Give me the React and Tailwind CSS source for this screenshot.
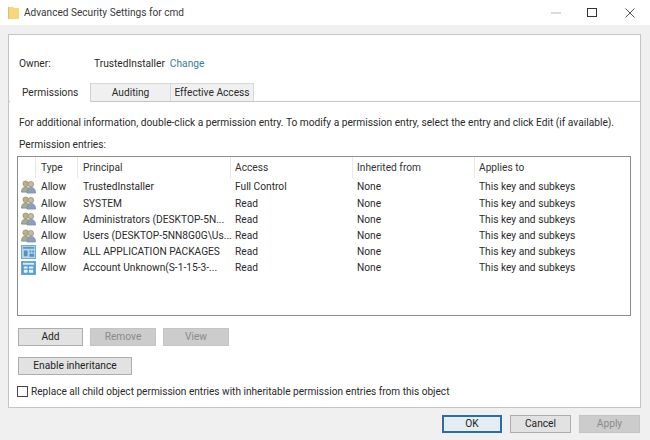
import React from "react";

const rows = [
  ["u", "TrustedInstaller", "Full Control"],
  ["u", "SYSTEM", "Read"],
  ["u", "Administrators (DESKTOP-5N...", "Read"],
  ["u", "Users (DESKTOP-5NN8G0G\\Us...", "Read"],
  ["p", "ALL APPLICATION PACKAGES", "Read"],
  ["q", "Account Unknown(S-1-15-3-...", "Read"],
];

function Users() {
  return (
    <svg width="15" height="14" viewBox="0 0 16 15" className="shrink-0">
      <circle cx="5" cy="4" r="3" fill="#c4ad84" stroke="#8c8576" strokeWidth="0.7" />
      <path d="M0.500 13 C0.500 8.500 2.500 7.500 5 7.500 C7.500 7.500 9.500 8.500 9.500 13 Z" fill="#a3ad91" stroke="#848c78" strokeWidth="0.7" />
      <circle cx="10.500" cy="4.500" r="3" fill="#c9b8a0" stroke="#8a8578" strokeWidth="0.7" />
      <path d="M6.500 14 C6.500 9 8.500 8 10.500 8 C13 8 15.500 9 15.500 14 Z" fill="#8d9fc0" stroke="#76849e" strokeWidth="0.7" />
    </svg>
  );
}

function Pkg({ solid }) {
  return (
    <svg width="15" height="14" viewBox="0 0 16 15" className="shrink-0">
      <rect x="0.500" y="0.500" width="15" height="14" fill={solid ? "#5a9fcc" : "#b4d7ee"} stroke="#6ba5cc" />
      <rect x="2" y="2" width="12" height="2" fill={solid ? "#d9ecf8" : "#5b96c4"} />
      {solid ? (
        <path d="M3 6h4v2H3zM8.500 6h4.500v2H8.500zM3 9.500h4v3H3zM8.500 9.500h4.500v3H8.500z" fill="#e6f2fa" />
      ) : (
        <path d="M3 6h4v6H3zM9 6h2v2H9zM12 6h2v2h-2zM9 9.500h5v3H9z" fill="#5a8fb9" />
      )}
    </svg>
  );
}

function Btn({ children, w, disabled, primary }) {
  return (
    <button
      className={`h-[18px] flex items-center justify-center border leading-none ${w} ${
        disabled
          ? "bg-[#cccccc] border-[#c4c4c4] text-[#8a8a8a]"
          : primary
          ? "bg-[#e3edf3] border-[#2a6f9e] border-2 text-[#222222]"
          : "bg-[#e2e2e2] border-[#adadad] text-[#222222]"
      }`}
    >
      {children}
    </button>
  );
}

export default function App() {
  return (
    <div className="w-[650px] h-[440px] bg-[#f0f0f0] overflow-hidden flex flex-col text-[10.2px] text-[#2a2a2a] font-['Roboto','Open_Sans',sans-serif]">
      {/* Title bar */}
      <div className="h-[25px] bg-white flex items-center shrink-0">
        <svg width="12" height="14" viewBox="0 0 12 14" className="ml-2 mt-[1px]">
          <path d="M0 1h5l1 1h5v11H0z" fill="#f6d77f" />
          <path d="M0 1h1v12H0z" fill="#e5bf5c" />
        </svg>
        <span className="ml-[4px] text-[10.1px] text-[#3a3a3a]">Advanced Security Settings for cmd</span>
        <div className="ml-auto flex items-center">
          <svg width="12" height="12" viewBox="0 0 12 12" className="mr-[25px]">
            <path d="M1 6h10" stroke="#b5b5b5" strokeWidth="1" />
          </svg>
          <svg width="10" height="10" viewBox="0 0 10 10" className="mr-[28px]">
            <rect x="0.500" y="0.500" width="9" height="8" fill="none" stroke="#333333" />
          </svg>
          <svg width="10" height="10" viewBox="0 0 10 10" className="mr-[15px]">
            <path d="M0.500 0.500L9.500 9.500M9.500 0.500L0.500 9.500" stroke="#444444" strokeWidth="0.9" />
          </svg>
        </div>
      </div>

      {/* Panel */}
      <div className="mt-[9px] ml-2 w-[633px] h-[374px] shrink-0 bg-white border border-[#c4c4c4] flex flex-col">
        <div className="h-[36px] flex items-end shrink-0 pl-[10px]">
          <span className="w-[75px]">Owner:</span>
          <span>TrustedInstaller</span>
          <span className="ml-[5px] text-[#3b7a9e]">Change</span>
        </div>
        {/* Tabs */}
        <div className="mt-[12px] h-[19px] flex items-stretch border-b border-[#c4c4c4] shrink-0">
          <div className="w-[81px] ml-[1px] pl-[12px] flex items-center bg-white border-r border-[#d0d0d0] h-[19px] z-10">
            Permissions
          </div>
          <div className="w-[80px] flex items-center justify-center bg-[#f0f0f0] border-r border-t border-[#d8d8d8]">
            Auditing
          </div>
          <div className="w-[83px] flex items-center justify-center bg-[#f0f0f0] border-r border-t border-[#d8d8d8]">
            Effective Access
          </div>
        </div>
        {/* Body */}
        <div className="flex flex-col pl-[8px] flex-1">
          <div className="mt-[14px] ml-[2px] leading-[14px] whitespace-nowrap">
            For additional information, double-click a permission entry. To modify a permission entry, select the entry and click Edit (if available).
          </div>
          <div className="mt-[8px] ml-[2px] leading-[14px]">Permission entries:</div>
          {/* List */}
          <div className="mt-[4px] w-[614px] h-[160px] border border-[#8c8c8c] shrink-0">
            <div className="flex h-[21px] items-center text-[#333333]">
              <div className="w-[18px] h-full border-r border-[#e8e8e8]" />
              <div className="w-[42px] pl-[5px] h-full flex items-center border-r border-[#e8e8e8]">Type</div>
              <div className="w-[153px] pl-[5px] h-full flex items-center border-r border-[#e8e8e8]">Principal</div>
              <div className="w-[122px] pl-[4px] h-full flex items-center border-r border-[#e8e8e8]">Access</div>
              <div className="w-[122px] pl-[4px] h-full flex items-center border-r border-[#e8e8e8]">Inherited from</div>
              <div className="pl-[4px] h-full flex items-center">Applies to</div>
            </div>
            <div className="mt-[1px] flex flex-col">
              {rows.map(([kind, name, access]) => (
                <div key={name} className="flex h-[16.2px] items-center">
                  <div className="w-[18px] pl-[3px] flex">
                    {kind === "u" ? <Users /> : <Pkg solid={kind === "q"} />}
                  </div>
                  <div className="w-[42px] pl-[5px]">Allow</div>
                  <div className="w-[153px] pl-[5px] whitespace-nowrap">{name}</div>
                  <div className="w-[122px] pl-[4px]">{access}</div>
                  <div className="w-[122px] pl-[4px]">None</div>
                  <div className="pl-[4px]">This key and subkeys</div>
                </div>
              ))}
            </div>
          </div>
          <div className="mt-[12px] flex gap-[7px] ml-[1px]">
            <Btn w="w-[65px]">Add</Btn>
            <Btn w="w-[66px]" disabled>Remove</Btn>
            <Btn w="w-[66px]" disabled>View</Btn>
          </div>
          <div className="mt-[11px] ml-[1px]">
            <Btn w="w-[114px]">Enable inheritance</Btn>
          </div>
          <div className="mt-[9px] flex items-center">
            <div className="w-[11px] h-[11px] border border-[#444444] bg-white shrink-0" />
            <span className="ml-[3px] text-[10.1px]">Replace all child object permission entries with inheritable permission entries from this object</span>
          </div>
        </div>
      </div>

      {/* Footer */}
      <div className="mt-[7px] mr-[10px] flex justify-end gap-[8px]">
        <Btn w="w-[60px]" primary>OK</Btn>
        <Btn w="w-[61px]">Cancel</Btn>
        <Btn w="w-[61px]" disabled>Apply</Btn>
      </div>
    </div>
  );
}
